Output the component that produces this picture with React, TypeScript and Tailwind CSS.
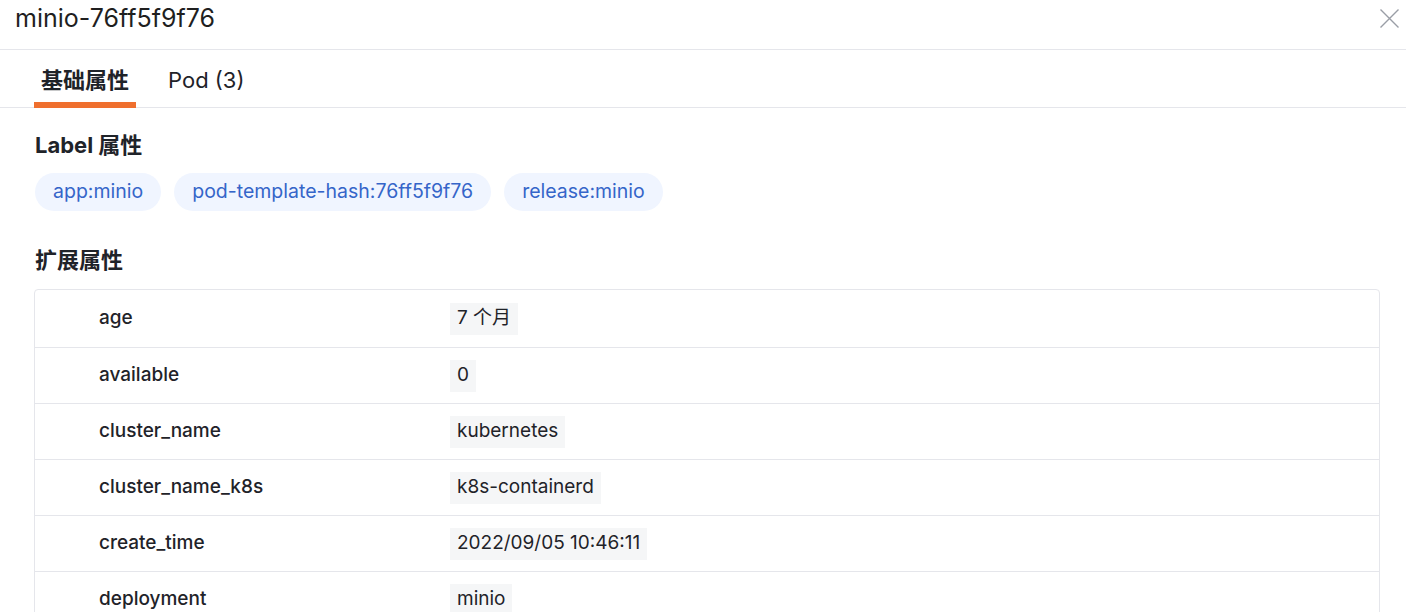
const labels = ["app:minio", "pod-template-hash:76ff5f9f76", "release:minio"];

const rows: { key: string; value: string }[] = [
  { key: "age", value: "7 个月" },
  { key: "available", value: "0" },
  { key: "cluster_name", value: "kubernetes" },
  { key: "cluster_name_k8s", value: "k8s-containerd" },
  { key: "create_time", value: "2022/09/05 10:46:11" },
  { key: "deployment", value: "minio" },
  { key: "namespace", value: "default" },
];

const font = "font-['Inter','Noto_Sans_CJK_SC',sans-serif]";

export default function App() {
  return (
    <div className={`h-[612px] w-[1406px] overflow-hidden bg-white text-[#1f2329] ${font}`}>
      <header className="flex h-[50px] items-start justify-between border-b border-[#e5e6eb] pl-[15px] pr-[7px] pt-[5px]">
        <h1 className="text-[25px] leading-[27px] text-[#1f1f1f]">minio-76ff5f9f76</h1>
        <button type="button" aria-label="Close" className="mt-[4px] flex h-[19px] w-[19px] items-center justify-center">
          <svg viewBox="0 0 19 19" className="h-[19px] w-[19px]" fill="none" stroke="#9a9ea6" strokeWidth={1.4}>
            <path d="M0.5 0.5L18.5 18.5M18.5 0.5L0.5 18.5" />
          </svg>
        </button>
      </header>

      <nav className="flex h-[58px] items-stretch gap-[32px] border-b border-[#e5e6eb] pl-[34px]">
        <div className="relative flex items-center px-[7px] pt-[3px] text-[22px] font-bold">
          基础属性
          <span className="absolute bottom-[-1px] left-0 right-0 h-[6px] bg-[#ef6f2e]" />
        </div>
        <div className="flex items-center pt-[4px] text-[22px] text-[#1f2329]">Pod (3)</div>
      </nav>

      <section className="pl-[35px] pr-[26px] pt-[23px]">
        <h3 className="text-[22px] font-bold leading-[28px]">Label 属性</h3>
        <div className="mt-[14px] flex flex-wrap gap-[13px]">
          {labels.map((l) => (
            <span
              key={l}
              className="flex h-[38px] items-center rounded-full bg-[#f0f5ff] px-[18px] text-[19.5px] text-[#3565c9]"
            >
              {l}
            </span>
          ))}
        </div>

        <h3 className="mt-[35px] text-[22px] font-bold leading-[28px]">扩展属性</h3>
        <div className="mt-[15px] ml-[-1px] rounded-[4px] border border-[#e5e6eb]">
          {rows.map((r, i) => (
            <div
              key={r.key}
              className={`flex items-center ${i > 0 ? "h-[56px] border-t border-[#e5e6eb]" : "h-[57px]"}`}
            >
              <div className="w-[415px] shrink-0 pl-[64px] text-[19px] font-medium">{r.key}</div>
              <div>
                <span className="inline-flex h-[32px] items-center bg-[#f5f6f7] px-[7px] text-[19px]">
                  {r.value}
                </span>
              </div>
            </div>
          ))}
        </div>
      </section>
    </div>
  );
}
